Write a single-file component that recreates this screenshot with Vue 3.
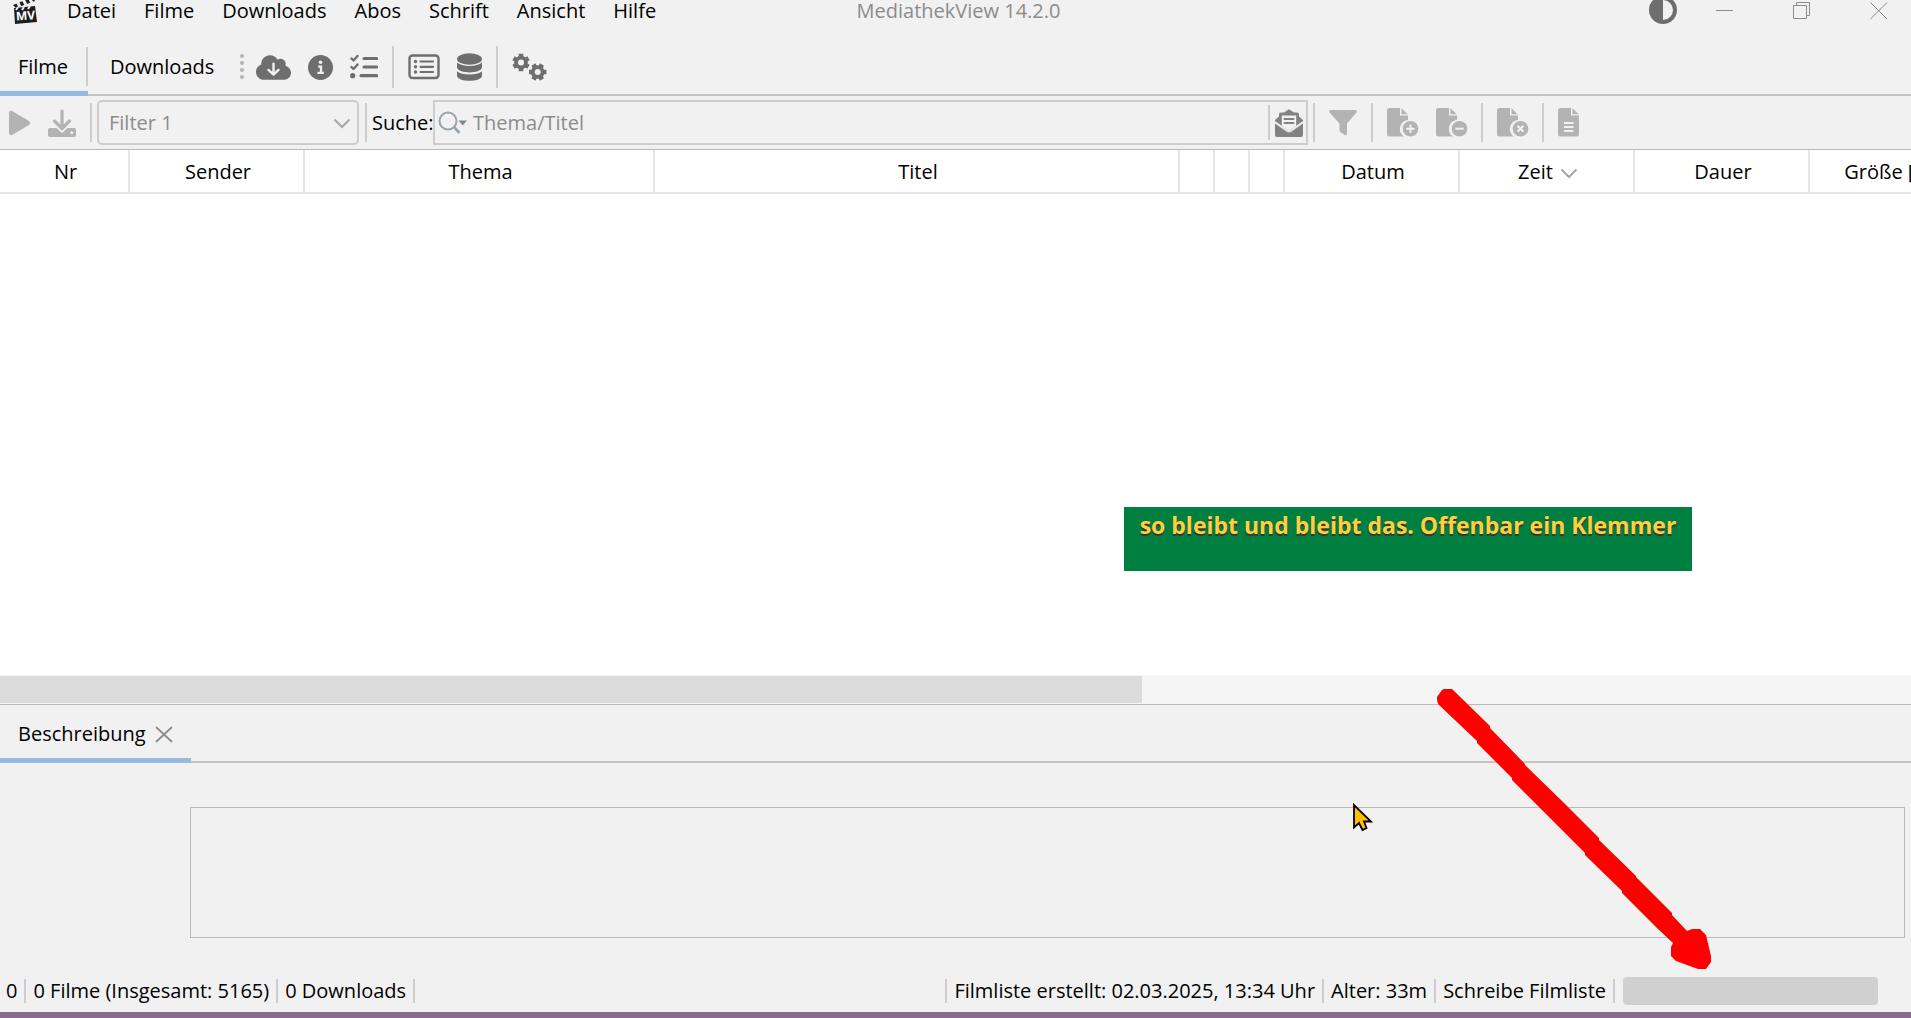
<script setup>
import { ref, computed } from 'vue'

const menus = ['Datei', 'Filme', 'Downloads', 'Abos', 'Schrift', 'Ansicht', 'Hilfe']

const columns = [
  { label: 'Nr', width: 130 },
  { label: 'Sender', width: 175 },
  { label: 'Thema', width: 350 },
  { label: 'Titel', width: 525 },
  { label: '', width: 35 },
  { label: '', width: 35 },
  { label: '', width: 35 },
  { label: 'Datum', width: 175 },
  { label: 'Zeit', width: 175, sorted: true },
  { label: 'Dauer', width: 175 },
  { label: 'Größe [MB]', width: 175 },
]
const tableWidth = computed(() => columns.reduce((sum, c) => sum + c.width, 0) + 'px')

const search = ref('')
const visibleShare = ref(1911 / 3198)
</script>

<template>
  <div class="app">
    <header class="titlebar">
      <nav class="menubar">
        <svg class="logo" width="24" height="28" viewBox="0 0 24 28" aria-hidden="true">
          <path d="M0 8 20 0 22 4 3 11Z" fill="#1d1d1f" />
          <path d="M4 4 7 10M10 2 13 8M16 0 19 6" stroke="#f1f1f1" stroke-width="3" />
          <path d="M1 11 22 9 24 25 2 27Z" fill="#1d1d1f" />
          <path d="M5 10 3 13M11 10 9 13M17 9 15 12" stroke="#f1f1f1" stroke-width="2" />
          <text x="3" y="23" class="logo-text" transform="rotate(-4 12 20)">MV</text>
        </svg>
        <button v-for="m in menus" :key="m" class="menu">{{ m }}</button>
      </nav>
      <h1 class="title">MediathekView 14.2.0</h1>
      <div class="window-buttons">
        <button class="theme" aria-label="Design wechseln">
          <svg width="28" height="28" viewBox="0 0 28 28">
            <circle cx="14" cy="14" r="12" fill="none" stroke="#6e6e6e" stroke-width="4" />
            <path d="M14 1a13 13 0 0 0 0 26Z" fill="#6e6e6e" />
          </svg>
        </button>
        <button aria-label="Minimieren">
          <svg width="18" height="18" viewBox="0 0 18 18"><path d="M0 8.5H17" class="thin" /></svg>
        </button>
        <button aria-label="Verkleinern">
          <svg width="18" height="18" viewBox="0 0 18 18">
            <path d="M.5 3.500H13.500V16.500H.5ZM3.500 3.500V.5H16.500V13.500H13.500" class="thin" />
          </svg>
        </button>
        <button aria-label="Schließen">
          <svg width="18" height="18" viewBox="0 0 18 18"><path d="M.5 .5 17 17M17 .5 .5 17" class="thin" /></svg>
        </button>
      </div>
    </header>

    <div class="tabrow">
      <div class="tabs" role="tablist">
        <button class="tab active first" role="tab" aria-selected="true">Filme</button>
        <button class="tab" role="tab" aria-selected="false">Downloads</button>
      </div>
      <div class="tools">
        <svg class="grip" width="4" height="26" viewBox="0 0 4 26" aria-hidden="true">
          <circle cx="2" cy="2" r="2" /><circle cx="2" cy="9" r="2" /><circle cx="2" cy="16" r="2" /><circle cx="2" cy="23" r="2" />
        </svg>
        <button class="tool cloud" aria-label="Filmliste laden">
          <svg width="35" height="25" viewBox="0 32 640 448">
            <path d="M0 336c0 79.500 64.500 144 144 144H512c70.700 0 128-57.300 128-128c0-61.900-44-113.600-102.400-125.400c4.100-10.700 6.400-22.400 6.400-34.600c0-53-43-96-96-96c-19.700 0-38.100 6-53.300 16.200C367 64.200 315.300 32 256 32C167.600 32 96 103.600 96 192c0 2.700 .1 5.400 .2 8.100C40.200 219.800 0 273.200 0 336z" />
            <path d="M320 185V385M228 300 320 388 412 300" fill="none" stroke="#f1f1f1" stroke-width="44" stroke-linecap="round" stroke-linejoin="round" />
          </svg>
        </button>
        <button class="tool" aria-label="Filminformation">
          <svg width="25" height="25" viewBox="0 0 24 24">
            <circle cx="12" cy="12" r="12" />
            <circle cx="12" cy="7" r="1.700" fill="#f1f1f1" />
            <path d="M9.800 11.200H12.500V17M9 17.200H15.200" fill="none" stroke="#f1f1f1" stroke-width="2.200" />
          </svg>
        </button>
        <button class="tool" aria-label="Aufgaben">
          <svg width="28" height="26" viewBox="0 0 28 26">
            <path d="M1.500 4.500 3.500 6.500 7.500 2M1.500 13 3.500 15 7.500 10.500" fill="none" stroke="#6e6e6e" stroke-width="2.400" stroke-linecap="round" stroke-linejoin="round" />
            <circle cx="2.700" cy="21.700" r="2.600" />
            <path d="M14 4.500H26.500M14 13H26.500M11 21.700H26.500" stroke="#6e6e6e" stroke-width="3.200" stroke-linecap="round" />
          </svg>
        </button>
        <span class="sep tall"></span>
        <button class="tool" aria-label="Liste">
          <svg width="32" height="26" viewBox="0 0 32 26">
            <rect x="1.500" y="1.500" width="29" height="22.500" rx="3" fill="none" stroke="#6e6e6e" stroke-width="2.400" />
            <path d="M12.500 7.500H25M12.500 12.800H25M12.500 18H25" stroke="#6e6e6e" stroke-width="2.200" stroke-linecap="round" />
            <circle cx="7.500" cy="7.500" r="1.700" /><circle cx="7.500" cy="12.800" r="1.700" /><circle cx="7.500" cy="18" r="1.700" />
          </svg>
        </button>
        <button class="tool" aria-label="Datenbank">
          <svg width="25" height="28" viewBox="0 0 25 28">
            <ellipse cx="12.500" cy="6" rx="12.500" ry="5.700" />
            <path d="M0 9.500C5 14 20 14 25 9.500V14.800C23 21 2 21 0 14.800ZM0 18.200C5 22.500 20 22.500 25 18.200V23.200C23 29.300 2 29.300 0 23.200Z" />
          </svg>
        </button>
        <span class="sep tall"></span>
        <button class="tool" aria-label="Einstellungen">
          <svg width="36" height="28" viewBox="0 0 36 28">
            <circle cx="9" cy="9.500" r="6.800" />
            <path d="M9 .8V18.200M1.500 5.200 16.500 13.800M1.500 13.800 16.500 5.200" stroke="#6e6e6e" stroke-width="4.600" />
            <circle cx="9" cy="9.500" r="3" fill="#f1f1f1" />
            <circle cx="25.700" cy="19" r="6.800" />
            <path d="M17 19H34.400M21.400 11.500 30 26.500M30 11.500 21.400 26.500" stroke="#6e6e6e" stroke-width="4.600" />
            <circle cx="25.700" cy="19" r="3" fill="#f1f1f1" />
          </svg>
        </button>
      </div>
    </div>

    <div class="filterbar">
      <button class="ftool play" disabled aria-label="Film abspielen">
        <svg width="22" height="26" viewBox="0 0 22 26"><path d="M0 3C0 .8 2 .3 3.500 1.200L20 11C21.500 12 21.500 14 20 15L3.500 24.800C2 25.700 0 25 0 23Z" /></svg>
      </button>
      <button class="ftool" disabled aria-label="Film aufzeichnen">
        <svg width="28" height="28" viewBox="0 0 28 28">
          <path d="M14 2V19M6.500 12 14 19.500 21.500 12" fill="none" stroke="#b3b3b3" stroke-width="3.200" stroke-linecap="round" stroke-linejoin="round" />
          <path d="M2 19H8.500L14 24 19.500 19H26Q28 19 28 21V26Q28 28 26 28H2Q0 28 0 26V21Q0 19 2 19Z" />
          <circle cx="23.700" cy="23.800" r="1.500" fill="#f1f1f1" />
        </svg>
      </button>
      <span class="sep"></span>
      <div class="combo">
        <select disabled aria-label="Filter">
          <option>Filter 1</option>
        </select>
        <svg class="chevron" width="18" height="11" viewBox="0 0 18 11" aria-hidden="true"><path d="M1.500 1.500 9 9 16.500 1.500" /></svg>
      </div>
      <span class="sep"></span>
      <label for="search" class="search-label">Suche:</label>
      <div class="search">
        <svg width="30" height="24" viewBox="0 0 30 24" aria-hidden="true">
          <circle cx="10" cy="10" r="8.500" fill="none" stroke="#9aa4ad" stroke-width="2" />
          <path d="M16 16 21.500 22" stroke="#9aa4ad" stroke-width="2.600" />
          <path d="M20.500 9.500H29L24.700 14.500Z" fill="#7f8b91" />
        </svg>
        <input id="search" v-model="search" type="text" placeholder="Thema/Titel" disabled />
        <span class="sep"></span>
        <button class="mail" aria-label="In Beschreibung suchen">
          <svg width="28" height="28" viewBox="0 0 28 28">
            <path d="M0 11 4 7.500V5.500Q4 3.500 6 3.500H9L14 .3 19 3.500H22Q24 3.500 24 5.500V7.500L28 11V14L14 24 0 14Z" />
            <path d="M6.800 6.500H21.200V17L14 22 6.800 17Z" fill="#f1f1f1" />
            <path d="M9.500 10H18.500M9.500 14H18.500" stroke="#828282" stroke-width="2" stroke-linecap="round" />
            <path d="M0 14.500 12 23Q14 24.300 16 23L28 14.500V26Q28 28 26 28H2Q0 28 0 26Z" />
            <path d="M0 13 12 21.700Q14 23 16 21.700L28 13" fill="none" stroke="#f1f1f1" stroke-width="1.600" />
          </svg>
        </button>
      </div>
      <span class="sep"></span>
      <button class="ftool funnel" disabled aria-label="Filterdialog">
        <svg width="28" height="26" viewBox="0 0 28 26"><path d="M1.500 0H26.500Q28.500 .5 27.500 2.500L18 13.500V24Q17.500 26 15.500 25L11.500 22Q10.500 21 10.500 20V13.500L.5 2.500Q-.5 .5 1.500 0Z" /></svg>
      </button>
      <span class="sep"></span>
      <template v-for="kind in ['plus', 'minus', 'x']" :key="kind">
        <button class="ftool doc" disabled :aria-label="'Liste ' + kind">
          <svg width="32" height="29" viewBox="0 0 32 29">
            <path d="M2.500 0H13V7.500H21V12A9 9 0 0 0 17 28.500H2.500Q0 28.500 0 26V2.500Q0 0 2.500 0Z" />
            <path d="M14.500 .3 20.700 6.200H14.500Z" />
            <circle cx="23.500" cy="20.700" r="9.200" fill="#f1f1f1" />
            <circle cx="23.500" cy="20.700" r="7.800" />
            <path v-if="kind === 'plus'" d="M23.500 16.500V25M19.300 20.700H27.700" class="mark" />
            <path v-else-if="kind === 'minus'" d="M19.300 20.700H27.700" class="mark" />
            <path v-else d="M20.500 17.700 26.500 23.700M26.500 17.700 20.500 23.700" class="mark" />
          </svg>
        </button>
        <span v-if="kind !== 'plus'" class="sep"></span>
      </template>
      <button class="ftool doc" disabled aria-label="Protokoll">
        <svg width="22" height="29" viewBox="0 0 22 29">
          <path d="M2.500 0H13V7.500H21V26Q21 28.500 18.500 28.500H2.500Q0 28.500 0 26V2.500Q0 0 2.500 0Z" />
          <path d="M14.500 .3 20.700 6.200H14.500Z" />
          <path d="M6 15H15.500M6 19H15.500M6 23H15.500" class="mark" />
        </svg>
      </button>
    </div>

    <main class="table-area">
      <table :style="{ width: tableWidth }">
        <colgroup>
          <col v-for="(c, i) in columns" :key="i" :style="{ width: c.width + 'px' }" />
        </colgroup>
        <thead>
          <tr>
            <th v-for="(c, i) in columns" :key="i" scope="col">
              {{ c.label }}<svg v-if="c.sorted" class="chevron sort" width="18" height="11" viewBox="0 0 18 11" aria-hidden="true"><path d="M1.500 1.500 9 9 16.500 1.500" /></svg>
            </th>
          </tr>
        </thead>
      </table>
    </main>
    <div class="scrollbar"><div class="thumb" :style="{ width: visibleShare * 100 + '%' }"></div></div>

    <section class="details">
      <div class="detail-tabs" role="tablist">
        <div class="tab active closable" role="tab" aria-selected="true">
          Beschreibung
          <button class="close" aria-label="Tab schließen">
            <svg width="18" height="17" viewBox="0 0 18 17"><path d="M1 1 17 16M17 1 1 16" stroke="#8c8c8c" stroke-width="1.800" /></svg>
          </button>
        </div>
      </div>
      <textarea class="description" readonly aria-label="Beschreibung"></textarea>
    </section>

    <footer class="status">
      <span>0</span>
      <span>0 Filme (Insgesamt: 5165)</span>
      <span>0 Downloads</span>
      <div class="list-state">
        <span>Filmliste erstellt: 02.03.2025, 13:34 Uhr</span>
        <span>Alter: 33m</span>
        <span>Schreibe Filmliste</span>
        <div class="progress" role="progressbar" aria-label="Schreibe Filmliste"></div>
      </div>
    </footer>

    <p class="note">so bleibt und bleibt das. Offenbar ein Klemmer</p>
    <svg class="arrow" width="274" height="282" viewBox="0 0 274 282" aria-hidden="true">
      <path d="M0 8 5 1Q10-2 15 0L53 37V39L88 75V76L126 113L162 149V151L199 187V188L235 224V226L250 242 255 240H263L269 246 274 267V273L269 280H261L239 272 234 267V258L236 254 221 240 185 204V202L148 166V164L113 129 75 91V89L40 54V52L2 16Q0 14 0 8Z" fill="#f00" />
    </svg>
    <svg class="cursor" width="22" height="30" viewBox="0 0 22 30" aria-hidden="true">
      <path d="M1 2V24.500L6 20 9.500 27 13.500 25 11 18.500H18Z" fill="#ffc000" stroke="#000" stroke-width="1.800" />
    </svg>
  </div>
</template>

<style>
body {
  background: #f1f1f1;
}
</style>

<style scoped>
.app {
  position: relative;
  display: flex;
  flex-direction: column;
  min-height: 100vh;
  box-sizing: border-box;
  border-bottom: 6px solid #8a6a8f;
  overflow: hidden;
  background: #f1f1f1;
  color: #000;
  font: 20px/24px "Open Sans", "Noto Sans", sans-serif;
}
button {
  border: 0;
  padding: 0;
  background: none;
  color: inherit;
  font: inherit;
}
svg {
  display: block;
  flex: none;
}
.titlebar {
  display: grid;
  grid-template-columns: 1fr auto 1fr;
  height: 38px;
}
.menubar {
  display: flex;
  align-items: flex-start;
  padding-left: 13px;
}
.logo {
  margin: -3px 16px 0 0;
}
.logo-text {
  fill: #fff;
  font: 700 12px "Open Sans", sans-serif;
}
.menu {
  padding: 0 14px;
  line-height: 22px;
}
.title {
  margin: 0;
  padding-left: 6px;
  color: #8c8c8c;
  font-size: 20px;
  font-weight: 400;
  line-height: 22px;
}
.window-buttons {
  display: flex;
  justify-content: flex-end;
  align-items: flex-start;
  gap: 59px;
  padding: 2px 23px 0 0;
}
.theme {
  margin: -6px -20px 0 0;
}
.thin {
  fill: none;
  stroke: #8c8c8c;
}
.tabrow {
  display: flex;
  height: 56px;
  border-bottom: 2px solid #c4c4c4;
}
.tabs {
  display: flex;
}
.tab {
  position: relative;
  padding: 2px 18px 0 22px;
}
.tab.first {
  width: 88px;
  padding: 2px 2px 0 0;
}
.tab.active::after {
  content: "";
  position: absolute;
  right: 0;
  bottom: -2px;
  left: 0;
  height: 5px;
  background: #97b9de;
}
.tab.first::before {
  content: "";
  position: absolute;
  top: 9px;
  right: 0;
  width: 2px;
  height: 39px;
  background: #cdcdcd;
}
.tools {
  display: flex;
  align-items: center;
  gap: 17px;
  padding: 2px 0 0 8px;
  fill: #6e6e6e;
}
.grip {
  margin-right: -5px;
  fill: #b3b3b3;
}
.sep {
  flex: none;
  width: 2px;
  height: 39px;
  background: #cdcdcd;
}
.sep.tall {
  height: 42px;
  margin: 0 -3px;
}
.filterbar {
  display: flex;
  align-items: center;
  height: 53px;
  border-bottom: 1px solid #b9b9b9;
  fill: #b3b3b3;
}
.ftool {
  margin-right: 14px;
}
.play {
  margin: 0 17px 0 9px;
}
.combo {
  position: relative;
  width: 262px;
  height: 45px;
  margin: 0 6px 0 5px;
}
.combo select {
  appearance: none;
  width: 100%;
  height: 100%;
  padding: 0 10px;
  border: 2px solid #cdcdcd;
  border-radius: 5px;
  background: #f1f1f1;
  color: #8c8c8c;
  font: inherit;
  opacity: 1;
}
.chevron {
  fill: none;
  stroke: #a6a6a6;
  stroke-width: 2;
}
.combo .chevron {
  position: absolute;
  top: 18px;
  right: 8px;
}
.search-label {
  width: 61px;
  margin-left: 5px;
}
.search {
  display: flex;
  flex: 0 1 875px;
  align-items: center;
  box-sizing: border-box;
  height: 45px;
  margin-right: 5px;
  padding: 0 3px;
  border: 2px solid #cdcdcd;
}
.search input {
  flex: 1;
  min-width: 0;
  padding: 0 5px;
  border: 0;
  background: none;
  color: #8c8c8c;
  font: inherit;
}
.search input::placeholder {
  color: #8c8c8c;
  opacity: 1;
}
.search .sep {
  height: 35px;
}
.mail {
  margin-left: 5px;
  fill: #828282;
}
.funnel {
  margin-left: 14px;
}
.doc {
  margin: 0 3px 0 14px;
}
.doc + .sep {
  margin-left: 10px;
}
.mark {
  fill: none;
  stroke: #f1f1f1;
  stroke-width: 2;
}
.table-area {
  flex: 1;
  overflow: hidden;
  background: #fff;
}
table {
  table-layout: fixed;
  border-collapse: separate;
  border-spacing: 0;
}
th {
  box-sizing: border-box;
  height: 44px;
  padding: 2px 0 0 3px;
  border-right: 2px solid #e6e6e6;
  border-bottom: 2px solid #e6e6e6;
  font-weight: 400;
  text-align: center;
  white-space: nowrap;
}
.sort {
  display: inline-block;
  margin-left: 7px;
}
.scrollbar {
  height: 28px;
  padding: 1px 0 0;
  border-bottom: 1px solid #b9b9b9;
  background: #f5f5f5;
}
.thumb {
  height: 27px;
  background: #dbdbdb;
}
.details {
  display: flex;
  flex-direction: column;
}
.detail-tabs {
  display: flex;
  height: 56px;
  border-bottom: 2px solid #c4c4c4;
}
.closable {
  display: flex;
  align-items: center;
  gap: 9px;
  padding: 2px 18px 0;
}
.description {
  height: 131px;
  margin: 44px 6px 0 190px;
  box-sizing: border-box;
  border: 1px solid #b9b9b9;
  background: #f1f1f1;
  font: inherit;
  resize: none;
  outline: 0;
}
.status {
  display: flex;
  align-items: center;
  height: 44px;
  margin-top: 30px;
  padding: 2px 33px 0 0;
  box-sizing: border-box;
  white-space: nowrap;
}
.status span {
  padding: 0 7px;
  border-right: 2px solid #cdcdcd;
}
.status span:first-child {
  padding-left: 6px;
}
.list-state {
  display: flex;
  align-items: center;
  margin-left: auto;
}
.status .list-state span:first-child {
  padding-left: 7px;
  border-left: 2px solid #cdcdcd;
}
.progress {
  width: 255px;
  height: 28px;
  margin-left: 8px;
  border-radius: 4px;
  background: #d0d0d0;
}
.note {
  position: absolute;
  top: 507px;
  left: 1124px;
  box-sizing: border-box;
  width: 568px;
  height: 64px;
  margin: 0;
  padding: 4px 0 0;
  background: #008040;
  color: #ffcf40;
  font-size: 23px;
  font-weight: 700;
  line-height: 28px;
  text-align: center;
  text-shadow: 0 2px 1px #333;
  white-space: nowrap;
}
.arrow {
  position: absolute;
  top: 689px;
  left: 1437px;
}
.cursor {
  position: absolute;
  top: 803px;
  left: 1353px;
}
</style>
